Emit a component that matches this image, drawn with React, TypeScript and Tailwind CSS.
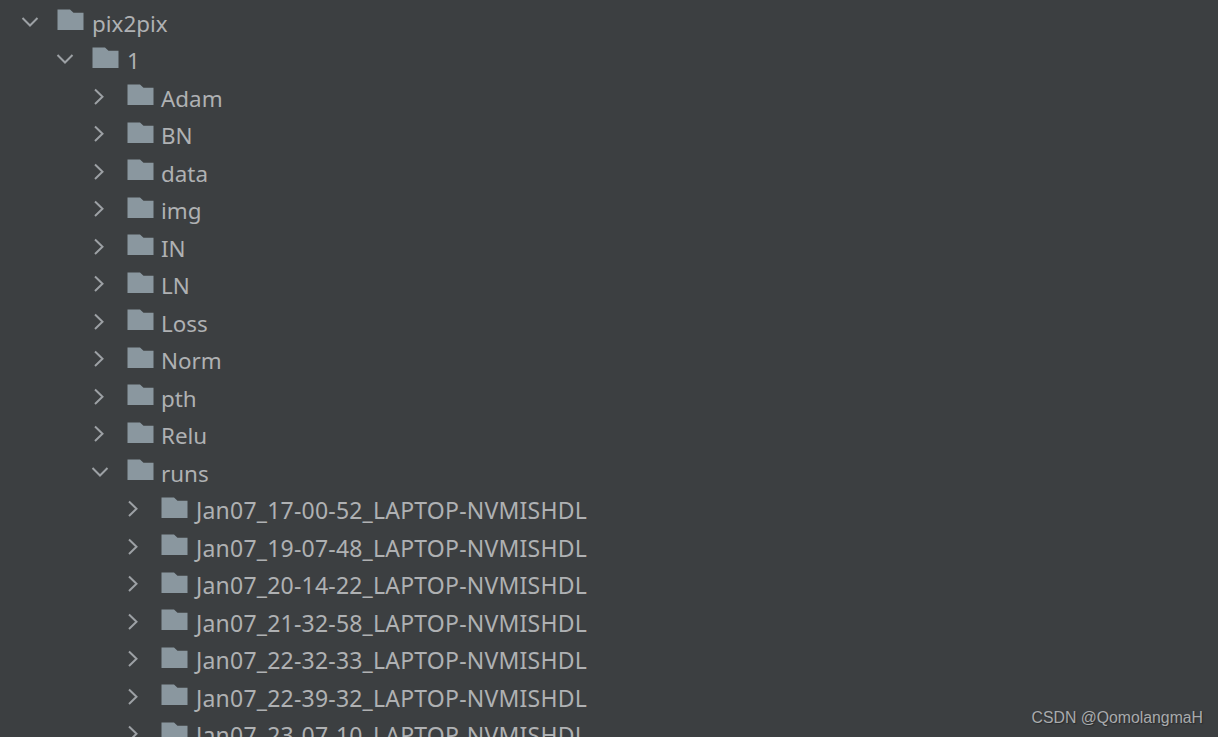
const rows = [
  { name: 'pix2pix', level: 0, open: true },
  { name: '1', level: 1, open: true },
  { name: 'Adam', level: 2 },
  { name: 'BN', level: 2 },
  { name: 'data', level: 2 },
  { name: 'img', level: 2 },
  { name: 'IN', level: 2 },
  { name: 'LN', level: 2 },
  { name: 'Loss', level: 2 },
  { name: 'Norm', level: 2 },
  { name: 'pth', level: 2 },
  { name: 'Relu', level: 2 },
  { name: 'runs', level: 2, open: true },
  { name: 'Jan07_17-00-52_LAPTOP-NVMISHDL', level: 3 },
  { name: 'Jan07_19-07-48_LAPTOP-NVMISHDL', level: 3 },
  { name: 'Jan07_20-14-22_LAPTOP-NVMISHDL', level: 3 },
  { name: 'Jan07_21-32-58_LAPTOP-NVMISHDL', level: 3 },
  { name: 'Jan07_22-32-33_LAPTOP-NVMISHDL', level: 3 },
  { name: 'Jan07_22-39-32_LAPTOP-NVMISHDL', level: 3 },
  { name: 'Jan07_23-07-10_LAPTOP-NVMISHDL', level: 3 },
]

const indents = ['pl-[21px]', 'pl-[56px]', 'pl-[91px]', 'pl-[125px]']
const labels = [
  'ml-[8px] mt-[2px] whitespace-nowrap text-[22.4px]',
  'ml-[8px] mt-[2px] whitespace-nowrap text-[22.4px]',
  'ml-[7px] mt-[2px] whitespace-nowrap text-[22.4px]',
  'ml-[8px] whitespace-nowrap text-[23px] tracking-[0.21px]',
]

function Chevron({ open }: { open?: boolean }) {
  return (
    <svg width="18" height="20" viewBox="0 0 18 20" fill="none" className="shrink-0 -mt-[2px]">
      <path
        d={open ? 'M1.5 6L9 13.5L16.5 6' : 'M4 2.5L11.5 9.75L4 17'}
        stroke="#9da1a5"
        strokeWidth="2"
      />
    </svg>
  )
}

function Folder() {
  return (
    <svg width="27" height="22" viewBox="0 0 27 22" className="ml-[18px] shrink-0 -mt-[5px]">
      <path d="M0.5 0.5H13L16.5 3.75H26.5V21H0.5Z" fill="#8a979f" />
    </svg>
  )
}

export default function App() {
  return (
    <div
      className="relative h-[737px] w-[1218px] overflow-hidden bg-[#3c3f41] pt-[4px] text-[#afb1b3]"
      style={{ fontFamily: '"Noto Sans", sans-serif' }}
    >
      {rows.map((r) => (
        <div key={r.name} className={`flex h-[37.5px] items-center ${indents[r.level]}`}>
          <Chevron open={r.open} />
          <Folder />
          <span className={labels[r.level]}>{r.name}</span>
        </div>
      ))}
      <div
        className="absolute bottom-[7px] right-[15px] text-[15.8px] text-[#a9abad] [text-shadow:1px_1px_1px_#2a2c2e]"
        style={{ fontFamily: '"Liberation Sans", sans-serif' }}
      >
        CSDN @QomolangmaH
      </div>
    </div>
  )
}
